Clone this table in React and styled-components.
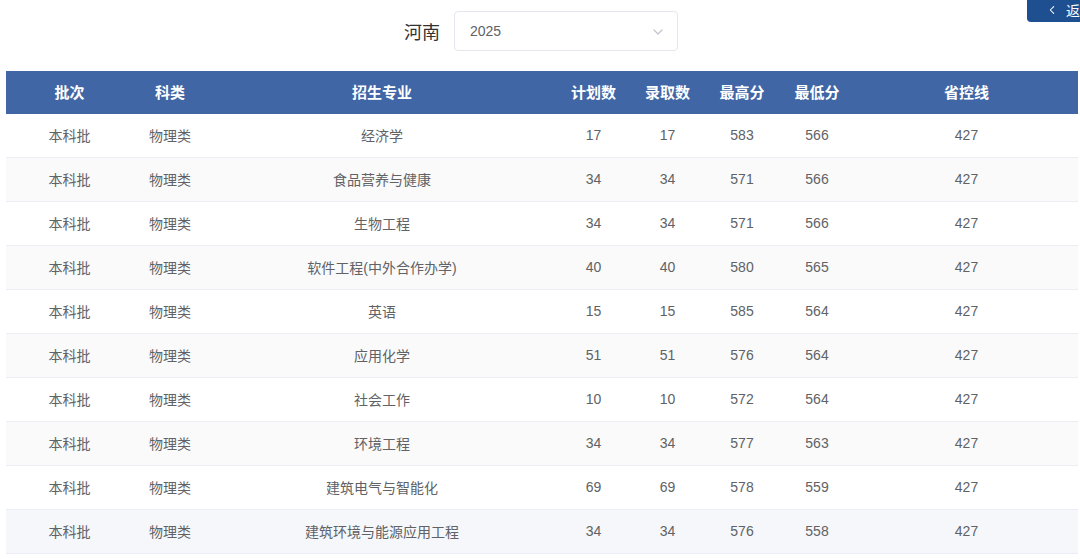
import React from "react";
import styled, { createGlobalStyle } from "styled-components";

const GlobalStyle = createGlobalStyle`
  body {
    margin: 0;
    background: #ffffff;
    font-family: "Liberation Sans", "Noto Sans CJK SC", sans-serif;
    overflow: hidden;
  }
`;

const columns = "127px 74px 350px 73px 75px 74px 76px 1fr";

const headers = ["批次", "科类", "招生专业", "计划数", "录取数", "最高分", "最低分", "省控线"];

const rows = [
  { id: 1, major: "经济学", plan: 17, admit: 17, max: 583, min: 566 },
  { id: 2, major: "食品营养与健康", plan: 34, admit: 34, max: 571, min: 566 },
  { id: 3, major: "生物工程", plan: 34, admit: 34, max: 571, min: 566 },
  { id: 4, major: "软件工程(中外合作办学)", plan: 40, admit: 40, max: 580, min: 565 },
  { id: 5, major: "英语", plan: 15, admit: 15, max: 585, min: 564 },
  { id: 6, major: "应用化学", plan: 51, admit: 51, max: 576, min: 564 },
  { id: 7, major: "社会工作", plan: 10, admit: 10, max: 572, min: 564 },
  { id: 8, major: "环境工程", plan: 34, admit: 34, max: 577, min: 563 },
  { id: 9, major: "建筑电气与智能化", plan: 69, admit: 69, max: 578, min: 559 },
  { id: 10, major: "建筑环境与能源应用工程", plan: 34, admit: 34, max: 576, min: 558, hover: true }
];

const Page = styled.div`
  position: relative;
  width: 1080px;
  height: 559px;
  overflow: hidden;
`;

const BackButton = styled.button`
  position: absolute;
  top: 0;
  left: 1027px;
  width: 80px;
  height: 22px;
  border: none;
  border-radius: 0 0 0 4px;
  background: #1d4f91;
  color: #ffffff;
  font-size: 14px;
  font-family: inherit;
  display: flex;
  align-items: center;
  gap: 8px;
  padding: 0 0 3px 19px;
  cursor: pointer;
`;

const Filter = styled.div`
  display: flex;
  align-items: center;
  justify-content: center;
  gap: 14px;
  padding: 11px 0 20px 0;
  margin-left: 2px;
`;

const Province = styled.span`
  font-size: 18px;
  color: #303133;
`;

const Select = styled.div`
  width: 224px;
  height: 40px;
  border: 1px solid #e4e7ed;
  border-radius: 4px;
  display: flex;
  align-items: center;
  justify-content: space-between;
  padding: 0 12px 0 15px;
  box-sizing: border-box;
  font-size: 14px;
  color: #606266;
`;

const Table = styled.div`
  margin: 0 2px 0 6px;
`;

const HeadRow = styled.div`
  display: grid;
  grid-template-columns: ${columns};
  height: 43px;
  align-items: center;
  background: #4066a6;
`;

const HeadCell = styled.div`
  text-align: center;
  color: #ffffff;
  font-size: 15px;
  font-weight: bold;
  padding-bottom: 2px;
`;

const Row = styled.div`
  display: grid;
  grid-template-columns: ${columns};
  height: 44px;
  align-items: center;
  box-sizing: border-box;
  border-bottom: 1px solid #ebeef5;
  background: ${(p) => (p.$hover ? "#f5f7fa" : p.$striped ? "#fafafa" : "#ffffff")};
`;

const Cell = styled.div`
  text-align: center;
  color: #606266;
  font-size: 14px;
  padding-bottom: 1px;
`;

function Chevron({ size, color, dir }) {
  const d = dir === "left" ? "M9 3 L5 7 L9 11" : "M3 6 L7 10 L11 6";
  return (
    <svg width={size} height={size} viewBox="0 0 14 14" fill="none">
      <path d={d} stroke={color} strokeWidth="1.2" strokeLinecap="round" strokeLinejoin="round" />
    </svg>
  );
}

export default function App() {
  return (
    <Page>
      <GlobalStyle />
      <BackButton>
        <Chevron size={12} color="#ffffff" dir="left" />
        返回
      </BackButton>
      <Filter>
        <Province>河南</Province>
        <Select>
          <span>2025</span>
          <Chevron size={14} color="#c0c4cc" />
        </Select>
      </Filter>
      <Table>
        <HeadRow>
          {headers.map((h) => (
            <HeadCell key={h}>{h}</HeadCell>
          ))}
        </HeadRow>
        {rows.map((r, i) => (
          <Row key={r.id} $striped={i % 2 === 1} $hover={r.hover}>
            <Cell>本科批</Cell>
            <Cell>物理类</Cell>
            <Cell>{r.major}</Cell>
            <Cell>{r.plan}</Cell>
            <Cell>{r.admit}</Cell>
            <Cell>{r.max}</Cell>
            <Cell>{r.min}</Cell>
            <Cell>427</Cell>
          </Row>
        ))}
      </Table>
    </Page>
  );
}
